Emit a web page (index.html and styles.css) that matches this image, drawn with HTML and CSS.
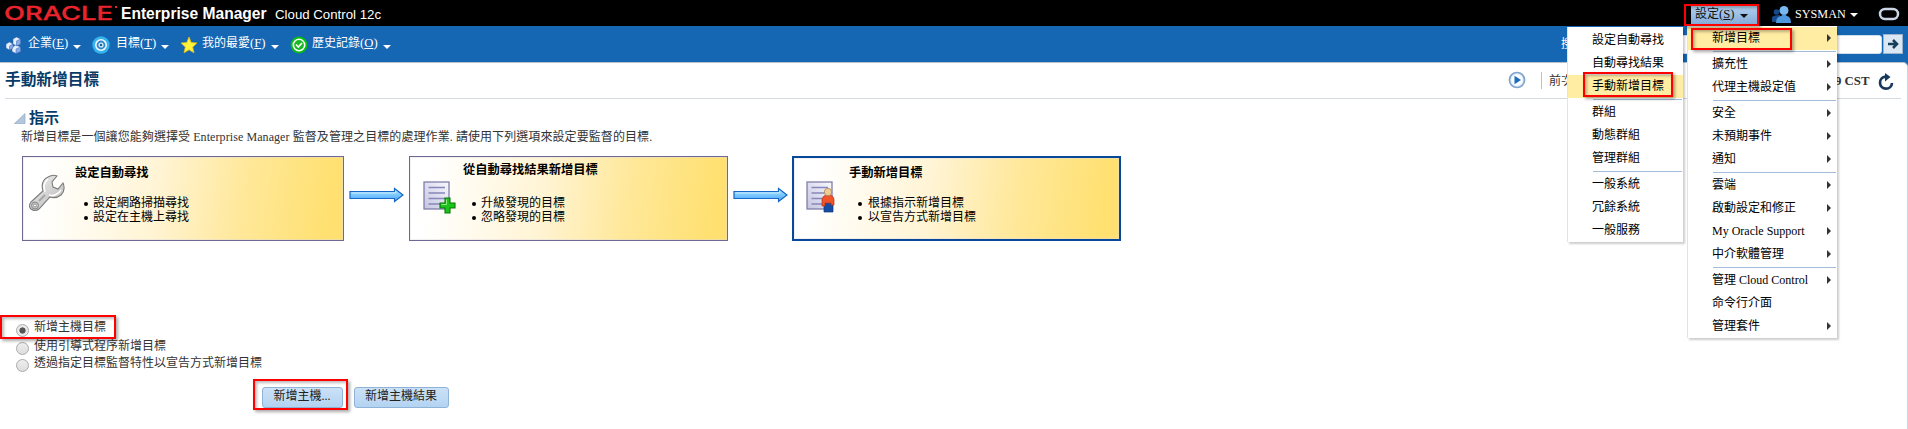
FILE: index.html
```html
<!DOCTYPE html>
<html lang="zh-Hant">
<head>
<meta charset="utf-8">
<title>手動新增目標</title>
<link rel="stylesheet" href="styles.css">
</head>
<body>
<svg class="defs" width="0" height="0">
  <defs>
    <linearGradient id="arrowFill" x1="0" y1="0" x2="0" y2="1"><stop offset="0" stop-color="#b4e8ff"/><stop offset="1" stop-color="#44a5ff"/></linearGradient>
    <linearGradient id="metal" x1="0" y1="0" x2="1" y2="1"><stop offset="0" stop-color="#f4f4f4"/><stop offset="1" stop-color="#b4b4b4"/></linearGradient>
    <linearGradient id="paper" x1="1" y1="0" x2="0" y2="1"><stop offset="0" stop-color="#f8f8ff"/><stop offset="1" stop-color="#c4c4e0"/></linearGradient>
    <symbol id="flow" viewBox="0 0 55 16"><path d="M1 4.500H45.500V1.500L54 8L45.500 14.500V11.500H1Z" fill="url(#arrowFill)" stroke="#1668c4" stroke-width="1.200"/><path d="M2.500 6H46.500V4" fill="none" stroke="#d6f3ff" stroke-width=".8"/></symbol>
    <symbol id="doc" viewBox="0 0 34 34"><rect x="1" y="1" width="25" height="27" fill="url(#paper)" stroke="#7f7faa" stroke-width="1.300"/><path d="M5.500 6.500H22M5.500 12H22M5.500 17.500H22M5.500 23H18" stroke="#8787b9" stroke-width="1.700"/></symbol>
  </defs>
</svg>
<header class="brand">
  <svg class="logo" width="116" height="26" viewBox="0 0 116 26"><text x="0" y="19.500" textLength="109" lengthAdjust="spacingAndGlyphs">ORACLE</text><rect x="111" y="6" width="2" height="2" fill="#e8242c"/></svg>
  <b class="product">Enterprise Manager</b>
  <span class="edition">Cloud Control 12c</span>
  <div class="account">
    <button class="setup">設定<span class="key">(<u>S</u>)</span><i class="down dark"></i></button>
    <svg class="users" width="20" height="20" viewBox="0 0 20 20"><g fill="#174a89"><circle cx="4.500" cy="8" r="2.800"/><path d="M0 18V13Q2 11 8 11V18Z"/></g><circle cx="12" cy="6.500" r="4.500" fill="#77b8ef"/><path d="M4 19Q4 13 9 12L12 10L15 12Q19 13 19 19Z" fill="#4c97dd"/></svg>
    <span class="user">SYSMAN</span><i class="down"></i>
    <svg class="ring" width="22" height="14" viewBox="0 0 22 14"><rect x="2" y="2" width="18" height="10" rx="5" fill="#000" stroke="#c9d5e5" stroke-width="2.500"/></svg>
  </div>
</header>
<nav class="bar">
  <div class="tab t1"><svg width="18" height="18" viewBox="0 0 18 18"><g stroke="#3463ad" stroke-width=".5"><g fill="#e6effd"><path d="M7 3L10.500 1L14.500 3V8L10.500 10L7 8Z"/><path d="M0 8L3.500 6L7 8V12L3.500 14L0 12Z"/><path d="M6 11L10 9L14.500 11V15.500L10 17.500L6 15.500Z"/></g><g fill="#86ace8"><path d="M10.500 5L14.500 3V8L10.500 10Z"/><path d="M3.500 10L7 8V12L3.500 14Z"/><path d="M10 13L14.500 11V15.500L10 17.500Z"/></g></g></svg><span>企業<span class="key">(<u>E</u>)</span></span><i class="down"></i></div>
  <div class="tab t2"><svg width="18" height="18" viewBox="0 0 18 18"><circle cx="9" cy="9" r="8.700" fill="#35b3ed"/><circle cx="9" cy="9" r="6" fill="#eef9ff"/><circle cx="9" cy="9" r="3.500" fill="#dff0fb" stroke="#2f86cf" stroke-width="1.800"/><circle cx="9" cy="9" r="1.300" fill="#17669f"/></svg><span>目標<span class="key">(<u>T</u>)</span></span><i class="down"></i></div>
  <div class="tab t3"><svg width="18" height="18" viewBox="0 0 18 18"><path d="M9 1L11.200 6.500L17 7L12.700 11L14 16.800L9 13.800L4 16.800L5.300 11L1 7L6.800 6.500Z" fill="#fff33c" stroke="#e2bd18" stroke-width=".8"/></svg><span>我的最愛<span class="key">(<u>F</u>)</span></span><i class="down"></i></div>
  <div class="tab t4"><svg width="18" height="18" viewBox="0 0 18 18"><circle cx="9" cy="9" r="8.500" fill="#08bd16"/><circle cx="9" cy="9" r="5.700" fill="#19b824" stroke="#fff" stroke-width="1.600"/><path d="M6 8.500L8.300 11L12 7" fill="none" stroke="#fff" stroke-width="1.700"/></svg><span>歷史記錄<span class="key">(<u>O</u>)</span></span><i class="down"></i></div>
  <div class="search"><span>搜</span><div class="field"></div><button class="go"><svg width="12" height="12" viewBox="0 0 12 12"><path d="M1 6H9M6 2L10 6L6 10" stroke="#153f5b" stroke-width="2.500" fill="none"/></svg></button></div>
</nav>
<main class="page">
  <div class="titlebar">
    <h1>手動新增目標</h1>
    <div class="status">
      <svg width="18" height="18" viewBox="0 0 18 18"><circle cx="9" cy="9" r="7.500" fill="#e3effb" stroke="#80a5cd" stroke-width="1.700"/><circle cx="9" cy="9" r="5.500" fill="#fff"/><path d="M6.500 4.800L13 9L6.500 13.200Z" fill="#1a6dc0"/></svg>
      <i class="divider"></i>
      <span class="refreshed">前次</span>
      <b>9 CST</b>
      <svg class="reload" width="18" height="18" viewBox="0 0 18 18"><path d="M8.500 3.700A6 6 0 1 0 15 10" fill="none" stroke="#17375c" stroke-width="2.700"/><path d="M8 0L13.500 4L8 8.500Z" fill="#17375c"/></svg>
    </div>
  </div>
  <h2><svg width="12" height="11" viewBox="0 0 12 11"><path d="M11 .5V10.500H.5Z" fill="#b2c7dc" stroke="#91abc3" stroke-width=".7"/></svg>指示</h2>
  <p class="intro">新增目標是一個讓您能夠選擇受 Enterprise Manager 監督及管理之目標的處理作業. 請使用下列選項來設定要監督的目標.</p>
  <div class="steps">
    <section class="card first">
      <svg width="38" height="38" viewBox="0 0 38 38"><path d="M3 28L15 17Q12 7 20 3Q25 0 29 2L24 8L25 13L30 15L35 9Q38 16 33 21Q28 25 22 23L11 35Q7 38 3 35Q0 32 3 28Z" fill="url(#metal)" stroke="#7b7b7b" stroke-width="1.100"/><path d="M17 18Q14 10 20 5M21 21Q28 23 33 16" fill="none" stroke="#fff" stroke-width="1.500"/><circle cx="7" cy="31.500" r="3.500" fill="#c9c9c9" stroke="#858585"/><circle cx="7" cy="31.500" r="1.500" fill="#fff" stroke="#909090"/><path d="M11 27L17 21" stroke="#a5a5a5" stroke-width="2"/></svg>
      <div><h3>設定自動尋找</h3><ul><li>設定網路掃描尋找</li><li>設定在主機上尋找</li></ul></div>
    </section>
    <svg class="flow" width="55" height="16"><use href="#flow"/></svg>
    <section class="card second">
      <svg width="34" height="34" viewBox="0 0 34 34"><use href="#doc"/><path d="M22 17H27V22H32V27H27V32H22V27H17V22H22Z" fill="#1bc41b" stroke="#08780b" stroke-width="1.100"/><path d="M23.500 18.500V23.500H18.500" fill="none" stroke="#92f082"/></svg>
      <div><h3>從自動尋找結果新增目標</h3><ul><li>升級發現的目標</li><li>忽略發現的目標</li></ul></div>
    </section>
    <svg class="flow" width="55" height="16"><use href="#flow"/></svg>
    <section class="card third">
      <svg width="34" height="34" viewBox="0 0 34 34"><use href="#doc"/><path d="M18 20H27V31H18Z" fill="#164da4" stroke="#0b347e" stroke-width=".7"/><path d="M16 25V18Q17 14 22 14Q28 14 28 19V24H25V22H19V25Z" fill="#ef542b" stroke="#b43117" stroke-width=".7"/><circle cx="22" cy="11" r="3.700" fill="#edcc96" stroke="#ad8049" stroke-width=".7"/></svg>
      <div><h3>手動新增目標</h3><ul><li>根據指示新增目標</li><li>以宣告方式新增目標</li></ul></div>
    </section>
  </div>
  <div class="choices">
    <label><i class="radio on"></i>新增主機目標</label>
    <label><i class="radio"></i>使用引導式程序新增目標</label>
    <label><i class="radio"></i>透過指定目標監督特性以宣告方式新增目標</label>
  </div>
  <div class="actions"><button class="add">新增主機...</button><button class="result">新增主機結果</button></div>
</main>
<div class="menu sub">
  <div>設定自動尋找</div><div>自動尋找結果</div><div class="active">手動新增目標</div><hr>
  <div>群組</div><div>動態群組</div><div>管理群組</div><hr>
  <div>一般系統</div><div>冗餘系統</div><div>一般服務</div>
</div>
<div class="menu main">
  <div class="more active">新增目標</div><hr>
  <div class="more">擴充性</div><div class="more">代理主機設定值</div><hr>
  <div class="more">安全</div><div class="more">未預期事件</div><div class="more">通知</div><hr>
  <div class="more">雲端</div><div class="more">啟動設定和修正</div><div class="more">My Oracle Support</div><div class="more">中介軟體管理</div><hr>
  <div class="more">管理 Cloud Control</div><div>命令行介面</div><div class="more">管理套件</div>
</div>
<i class="mark m1"></i><i class="mark m2"></i><i class="mark m3"></i><i class="mark m4"></i><i class="mark m5"></i>
</body>
</html>
```
FILE: styles.css
```css
* { box-sizing: border-box; }
body {
  margin: 0;
  height: 429px;
  position: relative;
  overflow: hidden;
  background: #1566b3;
  color: #333;
  font: 12px/14px "Liberation Serif", "Noto Sans CJK TC", serif;
  white-space: nowrap;
}
button { font: inherit; padding: 0; margin: 0; }
h1, h2, h3, p, ul { margin: 0; padding: 0; }
svg { display: block; flex: none; }
.defs { position: absolute; }

.brand { display: flex; height: 26px; background: #000; color: #fff; font-family: "Liberation Sans", Arial, sans-serif; }
.logo { margin-left: 4px; margin-right: 1px; }
.logo text { font: 500 18.5px Inter, sans-serif; fill: #e8242c; stroke: #e8242c; stroke-width: .3px; }
.product { width: 154px; font-size: 15.6px; line-height: 27px; }
.edition { font-size: 13.25px; line-height: 29px; }
.account { margin-left: auto; display: flex; align-items: center; padding-right: 8px; font-family: "Liberation Serif", "Noto Sans CJK TC", serif; }
.setup { display: flex; align-items: center; width: 66px; height: 21px; margin-top: 4px; padding-left: 4px; padding-bottom: 3px; border: 0; background: linear-gradient(#b5d2ef, #7fa9d9); color: #111; }
.key { font-size: 12.7px; }
.users { margin: 2px 3px 0 15px; }
.user { width: 50px; margin-top: 1px; font-size: 12.2px; }
.ring { margin-left: 20px; margin-top: 1px; }
.down { width: 0; height: 0; border: 4px solid transparent; border-top-color: #fff; border-bottom: 0; margin: 4px 0 0 5px; }
.down.dark { border-top-color: #111; margin-top: 5px; }

.bar { display: flex; height: 36px; color: #fff; padding-left: 6px; }
.tab { display: flex; align-items: center; padding-top: 1px; }
.tab svg { margin: 1px 5px 0 0; }
.tab > span { margin-top: -4px; }
.t1 { width: 86px; }
.t2 { width: 88px; }
.t3 { width: 110px; }
.t1 svg { margin-right: 4px; }
.t2 svg { margin-right: 6px; }
.t3 svg { margin-right: 4px; }
.t4 svg { margin-right: 4px; }
.search { margin-left: auto; display: flex; align-items: center; padding-right: 5px; }
.search span { width: 80px; }
.field { width: 241px; height: 19px; border: 1px solid #cfdcea; border-radius: 3px; background: #fff; }
.go { display: flex; align-items: center; justify-content: center; width: 20px; height: 20px; margin-left: 1px; border: 1px solid #99b4cf; background: #dbe8f4; }

.page { height: 367px; background: #fff; border-top: 1px solid #b5c1d0; border-right: 1px solid #c9d6e3; border-top-right-radius: 5px; }
.titlebar { display: flex; justify-content: space-between; height: 36px; margin: 0 6px 0 5px; border-bottom: 1px solid #d5d9e0; }
h1 { font: bold 15.7px/32px "Noto Sans CJK TC", sans-serif; color: #083b66; }
.status { display: flex; align-items: center; padding-right: 6px; margin-top: -1px; }
.divider { width: 1px; height: 17px; background: #b8c2cb; margin: 0 7px 0 15px; }
.refreshed { width: 286px; margin-top: 2px; }
.status b { width: 42px; margin-top: 2px; font-size: 12.8px; color: #333; }
.reload { margin-top: 3px; }
h2 { display: flex; align-items: center; gap: 3px; height: 22px; margin: 7px 0 0 14px; font: bold 15px/22px "Noto Sans CJK TC", sans-serif; color: #083b66; }
h2 svg { margin-top: 3px; }
.intro { margin: 2px 0 0 21px; height: 14px; letter-spacing: .08px; }

.steps { display: flex; margin: 12px 0 0 22px; height: 85px; align-items: stretch; color: #000; }
.card { display: flex; border: 1px solid #6c6995; background: linear-gradient(98deg, #fff 7%, #fff4d4 42%, #ffe89a 68%, #ffe070 95%); box-shadow: inset 0 0 0 1px #dbd9df66; }
.card h3 { font-size: 12.250px; line-height: 14px; font-weight: bold; }
.card ul { list-style: none; }
.card li { position: relative; padding-left: 18px; }
.card li::before { content: ""; position: absolute; left: 9px; top: 6px; width: 4px; height: 4px; border-radius: 50%; background: #000; }
.first { width: 322px; padding: 9px 0 0 5px; }
.first svg { margin: 8px 9px 0 0; }
.first ul { margin-top: 16px; }
.second { width: 319px; padding: 6px 0 0 13px; }
.second svg { margin: 18px 6px 0 0; }
.second ul { margin-top: 19px; }
.third { width: 329px; padding: 8px 0 0 12px; border: 2px solid #07489a; }
.third svg { margin: 15px 9px 0 0; }
.third ul { margin-top: 16px; }
.third li { padding-left: 19px; }
.steps .flow { align-self: flex-start; margin: 31px 5px 0; }
.steps .flow:last-of-type { margin-right: 4px; }

.choices { margin: 79px 0 0 16px; }
.choices label { display: flex; height: 17.500px; line-height: 15px; }
.choices label + label { line-height: 17px; }
.radio { width: 13px; height: 13px; margin: 4px 5px 0 0; border: 1px solid #aaa; border-radius: 50%; background: linear-gradient(#eee, #ddd); }
.radio.on { background: radial-gradient(circle, #555 0 2.800px, #e9e9e9 3.400px); }
.actions { display: flex; gap: 11px; margin: 14px 0 0 262px; }
.actions button { height: 21px; padding: 0 1px 3px 0; border: 1px solid #8eb3d7; border-radius: 3px; background: linear-gradient(#cbe1f6, #b3d3f2); color: #222; }
.add { width: 81px; }
.result { width: 95px; }

.menu { position: absolute; background: #fff; color: #000; border-left: 1px solid #e3e3e3; box-shadow: 2px 2px 2px #0003; line-height: 22px; }
.menu > div { height: 23px; padding-left: 24px; }
.menu hr { height: 3px; margin: 0 1px 0 25px; border: 0; background: linear-gradient(#0000 1px, #a3bcda 1px 2px, #0000 2px); }
.menu .active { background: #ffeda4; }
.sub { left: 1567px; top: 27px; width: 116px; height: 215px; padding-top: 2px; }
.main { left: 1687px; top: 26px; width: 150px; height: 312px; padding-top: 1px; }
.menu .more { display: flex; justify-content: space-between; align-items: center; padding-right: 6px; line-height: 21px; padding-bottom: 1px; }
.more::after { content: ""; border: 4px solid transparent; border-left-color: #333; border-right: 0; }

.mark { position: absolute; border: 2px solid #fe0000; box-shadow: 2px 2px 3px #0005, inset 2px 2px 3px #0004; }
.m1 { left: 1684px; top: 4px; width: 75px; height: 22px; }
.m2 { left: 1691px; top: 28px; width: 101px; height: 22px; }
.m3 { left: 1583px; top: 72px; width: 90px; height: 25px; }
.m4 { left: 0; top: 315px; width: 116px; height: 24px; }
.m5 { left: 253px; top: 379px; width: 95px; height: 31px; }
```
